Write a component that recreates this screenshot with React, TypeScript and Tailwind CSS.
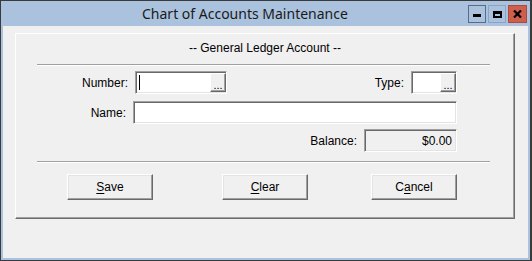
import React from "react";

const sunken =
  "border border-t-[#a0a0a0] border-l-[#a0a0a0] border-r-white border-b-white shadow-[inset_1px_1px_0_#696969,inset_-1px_-1px_0_#e3e3e3]";

function Dots() {
  return (
    <div className="w-[16px] h-[19px] bg-[#f0f0f0] border border-t-white border-l-white border-r-[#696969] border-b-[#696969] shadow-[inset_-1px_-1px_0_#a0a0a0] flex items-end justify-center pb-[2px]">
      <span className="text-[11px] leading-[8px] tracking-[0px]">...</span>
    </div>
  );
}

function Btn({ pre, u, post }: { pre: string; u: string; post: string }) {
  return (
    <div className="w-[86px] h-[26px] bg-[#f0f0f0] border border-t-white border-l-white border-r-[#696969] border-b-[#696969] shadow-[inset_-1px_-1px_0_#a0a0a0,inset_1px_1px_0_#e3e3e3] flex items-center justify-center">
      <span>
        {pre}
        <span className="underline underline-offset-[2px]">{u}</span>
        {post}
      </span>
    </div>
  );
}

export default function App() {
  return (
    <div
      className="w-[532px] h-[261px] bg-[#aac2dd] border-l border-t border-r-2 border-b border-[#3a3a3a] flex flex-col text-[12px] text-black"
      style={{ fontFamily: '"Liberation Sans", Arial, sans-serif' }}
    >
      {/* Title bar */}
      <div className="h-[25px] flex items-start shrink-0">
        <div className="flex-1 pl-[141px] pt-[3px] text-[14px] leading-[20px] text-[#1a1a1a]" style={{ fontFamily: '"Noto Sans", sans-serif' }}>
          Chart of Accounts Maintenance
        </div>
        <div className="flex gap-[2px] pt-[4px] pr-[3px]">
          <div className="w-[18px] h-[18px] border border-[#5a6c85] bg-[#aac2dd] flex items-end justify-center pb-[5px]">
            <div className="w-[8px] h-[3px] bg-black" />
          </div>
          <div className="w-[18px] h-[18px] border border-[#8aa4c4] bg-[#aac2dd] flex items-center justify-center">
            <div className="w-[9px] h-[7px] border-2 border-black border-t-[3px]" />
          </div>
          <div className="w-[19px] h-[18px] border border-[#b04a3c] bg-[#cf5f4d] flex items-center justify-center">
            <svg width="9" height="8" viewBox="0 0 9 8">
              <path d="M1 0.5 L8 7.5 M8 0.5 L1 7.5" stroke="black" strokeWidth="2.2" />
            </svg>
          </div>
        </div>
      </div>

      {/* Client */}
      <div className="flex-1 ml-[2px] mr-[2px] mb-[2px] bg-[#f0f0f0] pt-[7px] pl-[12px]">
        <div className="w-[500px] h-[186px] border border-t-white border-l-white border-r-[#6d6d6d] border-b-[#6d6d6d] shadow-[inset_-1px_-1px_0_#a0a0a0] flex flex-col">
          <div className="h-[30px] pt-[7px] text-center leading-[14px]">-- General Ledger Account --</div>
          <div className="ml-[21px] w-[453px] h-[2px] border-t border-[#a0a0a0] border-b border-b-white" />

          {/* Row 1 */}
          <div className="mt-[5px] h-[23px] flex items-center">
            <div className="w-[112px] text-right">Number:</div>
            <div className={`ml-[7px] w-[92px] h-[23px] bg-white ${sunken} flex items-center pl-[2px] pr-[0px]`}>
              <div className="w-px h-[15px] bg-black ml-[1px]" />
              <div className="flex-1" />
              <Dots />
            </div>
            <div className="w-[177px] text-right">Type:</div>
            <div className={`ml-[7px] w-[46px] h-[23px] bg-white ${sunken} flex items-center justify-end`}>
              <Dots />
            </div>
          </div>

          {/* Row 2 */}
          <div className="mt-[7px] h-[23px] flex items-center">
            <div className="w-[110px] text-right">Name:</div>
            <div className={`ml-[7px] w-[324px] h-[23px] bg-white ${sunken}`} />
          </div>

          {/* Row 3 */}
          <div className="mt-[5px] h-[23px] flex items-center">
            <div className="w-[341px] text-right">Balance:</div>
            <div className={`ml-[7px] w-[93px] h-[23px] bg-[#f0f0f0] ${sunken} flex items-center justify-end pr-[4px]`}>
              $0.00
            </div>
          </div>

          <div className="mt-[9px] ml-[21px] w-[453px] h-[2px] border-t border-[#a0a0a0] border-b border-b-white" />

          {/* Buttons */}
          <div className="mt-[11px] flex">
            <div className="ml-[51px]">
              <Btn pre="" u="S" post="ave" />
            </div>
            <div className="ml-[69px]">
              <Btn pre="" u="C" post="lear" />
            </div>
            <div className="ml-[63px]">
              <Btn pre="C" u="a" post="ncel" />
            </div>
          </div>
        </div>
      </div>
    </div>
  );
}
